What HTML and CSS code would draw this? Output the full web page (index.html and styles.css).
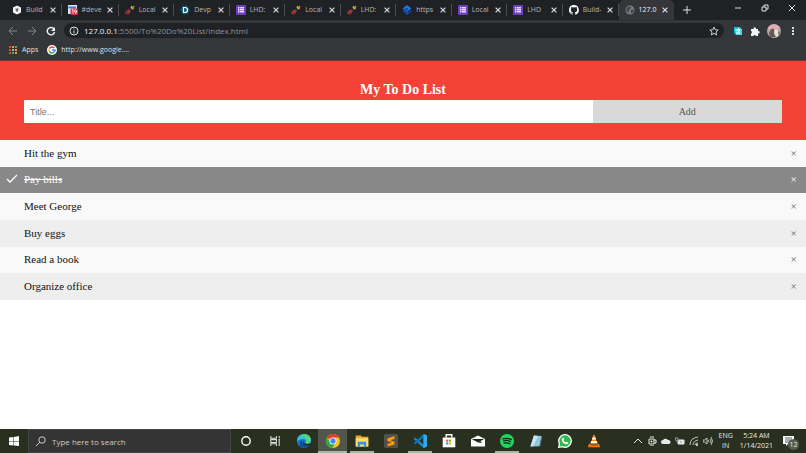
FILE: index.html
```html
<!DOCTYPE html>
<html lang="en">
<head>
    <meta charset="UTF-8">
    <meta name="viewport" content="width=device-width, initial-scale=1.0">
    <title>My To Do List</title>
    <link rel="stylesheet" href="styles.css">
</head>
<body>
    <!-- shared icons -->
    <svg class="defs" aria-hidden="true">
        <symbol id="close" viewBox="0 0 10 10"><path d="M2 2l6 6M8 2l-6 6" fill="none" stroke="currentColor" stroke-width="1.6"/></symbol>
        <symbol id="rocket" viewBox="0 0 20 20"><path d="M13 1l2 3 3-3 1 3-3 2 3 2-4 1-4-3 1-4z" fill="#d9a82f"/><path d="M10 6l4 4-3 3-4-4z" fill="#27365c"/><path d="M7 9l4 4-4 6-6-1 0-5z" fill="#c9362d"/><path d="M4 12l4 4-2 2-4-4z" fill="#27365c"/></symbol>
        <symbol id="form" viewBox="0 0 20 20"><rect width="20" height="20" rx="2" fill="#6f3fc0"/><path d="M4 4h3v3H4zM8 4h8v3H8zM4 8h3v3H4zM8 8h8v3H8zM4 12h3v3H4zM8 12h8v3H8z" fill="#e9defa"/></symbol>
        <symbol id="chrome" viewBox="0 0 20 20"><circle cx="10" cy="10" r="10" fill="#fbc116"/><path d="M10 10L1.4 5A10 10 0 0 1 18.7 5H10z" fill="#e33b2e"/><path d="M1.4 5A10 10 0 0 0 9 20l5-8-4-2-4 2z" fill="#2da94f"/><circle cx="10" cy="10" r="5" fill="#fff"/><circle cx="10" cy="10" r="3.8" fill="#4285f4"/></symbol>
    </svg>

    <header class="browser">
        <div class="tabs">
            <div class="tab-list">
                <div class="tab"><svg class="favicon" viewBox="0 0 20 20"><path d="M10 1l8 4v10l-8 4-8-4V5z" fill="#f2f2f2"/><path d="M7 7h6l-1 6H8z" fill="#666"/></svg><span>Build</span><button aria-label="Close tab"><svg><use href="#close"/></svg></button></div>
                <div class="tab"><svg class="favicon" viewBox="0 0 20 20"><rect width="18" height="18" fill="#dce3f4"/><path d="M1 3h15v4H1z" fill="#4b73d8"/><rect x="5" y="7" width="15" height="13" rx="3" fill="#e0304a"/><path d="M8 10l2-1v8M17 13a2 2 0 1 1-4-1 2 2 0 1 1 4 0v3l-3 2" fill="none" stroke="#fff" stroke-width="1.6"/></svg><span>#deve</span><button aria-label="Close tab"><svg><use href="#close"/></svg></button></div>
                <div class="tab"><svg class="favicon"><use href="#rocket"/></svg><span>Local</span><button aria-label="Close tab"><svg><use href="#close"/></svg></button></div>
                <div class="tab"><svg class="favicon" viewBox="0 0 20 20"><path d="M5 1h10l5 9-5 9H5l-5-9z" fill="#075468"/><path d="M7 5h3q5 0 5 5t-5 5H7z" fill="none" stroke="#fff" stroke-width="2.4"/></svg><span>Devp</span><button aria-label="Close tab"><svg><use href="#close"/></svg></button></div>
                <div class="tab"><svg class="favicon"><use href="#form"/></svg><span>LHD:</span><button aria-label="Close tab"><svg><use href="#close"/></svg></button></div>
                <div class="tab"><svg class="favicon"><use href="#rocket"/></svg><span>Local</span><button aria-label="Close tab"><svg><use href="#close"/></svg></button></div>
                <div class="tab"><svg class="favicon"><use href="#rocket"/></svg><span>LHD:</span><button aria-label="Close tab"><svg><use href="#close"/></svg></button></div>
                <div class="tab"><svg class="favicon" viewBox="0 0 20 20"><path d="M10 0l9 7-9 7-9-7z" fill="#1f78db"/><path d="M1 11l9-6 3 3-5 4 4 3 7-5v3l-9 7z" fill="#0c4fac"/></svg><span>https</span><button aria-label="Close tab"><svg><use href="#close"/></svg></button></div>
                <div class="tab"><svg class="favicon"><use href="#form"/></svg><span>Local</span><button aria-label="Close tab"><svg><use href="#close"/></svg></button></div>
                <div class="tab"><svg class="favicon"><use href="#form"/></svg><span>LHD</span><button aria-label="Close tab"><svg><use href="#close"/></svg></button></div>
                <div class="tab"><svg class="favicon" viewBox="0 0 16 16"><path fill="#fff" d="M8 0a8 8 0 0 0-2.5 15.6c.4 0 .5-.2.5-.4v-1.500c-2.200.5-2.700-1-2.700-1-.4-.9-.9-1.200-.9-1.200-.7-.5 0-.5 0-.5.8.1 1.200.8 1.200.8.7 1.300 1.900.9 2.400.7 0-.5.3-.9.5-1.100-1.800-.2-3.600-.9-3.600-4 0-.8.3-1.600.8-2.100 0-.2-.3-1 .1-2.100 0 0 .7-.2 2.200.8a7.500 7.500 0 0 1 4 0c1.500-1 2.200-.8 2.200-.8.4 1.100.1 1.900.1 2.100.5.600.8 1.300.8 2.100 0 3.100-1.900 3.800-3.700 4 .3.2.6.7.6 1.500v2.200c0 .2.1.5.5.4A8 8 0 0 0 8 0z"/></svg><span>Build-</span><button aria-label="Close tab"><svg><use href="#close"/></svg></button></div>
                <div class="tab active"><svg class="favicon" viewBox="0 0 20 20"><circle cx="10" cy="10" r="9" fill="#777b80"/><path d="M3 7l4-4 5 1-1 4-4 2 1 3-2 2-3-4zM12 10l6-1-2 6-4 1z" fill="#414347"/></svg><span>127.0</span><button aria-label="Close tab"><svg><use href="#close"/></svg></button></div>
            </div>
            <button class="new-tab" aria-label="New tab"><svg viewBox="0 0 10 10"><path d="M5 1v8M1 5h8" stroke="currentColor"/></svg></button>
            <div class="window-buttons">
                <button aria-label="Minimize"><svg viewBox="0 0 10 10"><path d="M2 5h6" stroke="currentColor"/></svg></button>
                <button aria-label="Restore"><svg viewBox="0 0 10 10"><path d="M2 4h4v4H2zM4 4V2h4v4H6" fill="none" stroke="currentColor"/></svg></button>
                <button aria-label="Close"><svg viewBox="0 0 10 10"><path d="M2 2l6 6M8 2l-6 6" stroke="currentColor"/></svg></button>
            </div>
        </div>

        <div class="toolbar">
            <button class="nav" aria-label="Back"><svg viewBox="0 0 10 10"><path d="M9 5H1M5 1L1 5l4 4" fill="none" stroke="currentColor"/></svg></button>
            <button class="nav" aria-label="Forward"><svg viewBox="0 0 10 10"><path d="M1 5h8M5 1l4 4-4 4" fill="none" stroke="currentColor"/></svg></button>
            <button class="nav reload" aria-label="Reload"><svg viewBox="0 0 10 10"><path d="M8 3a3.700 3.700 0 1 0 .6 3" fill="none" stroke="currentColor" stroke-width="1.400"/><path d="M9 1v4H5z" fill="currentColor"/></svg></button>
            <div class="address">
                <svg viewBox="0 0 10 10"><circle cx="5" cy="5" r="4" fill="none" stroke="currentColor"/><path d="M5 4.500v3M5 2.500v1" stroke="currentColor"/></svg>
                <span class="url"><b>127.0.0.1</b>:5500/To%20Do%20List/index.html</span>
                <svg viewBox="0 0 10 10"><path d="M5 1l1.200 2.700 2.900.3L7 6l.6 2.900L5 7.400 2.400 8.900 3 6 .9 4l2.900-.3z" fill="none" stroke="currentColor" stroke-width=".9"/></svg>
            </div>
            <div class="extensions">
                <svg viewBox="0 0 10 10"><path d="M1 1h6l2 2v6H3L1 7z" fill="#14bfd3"/><path d="M3 3h6v6H3z" fill="#4fd9e6"/><path d="M2 4h5M5 2l2 2-2 2M3 7h4" fill="none" stroke="#fff"/></svg>
                <svg viewBox="0 0 10 10"><path d="M1 3h2.500a1.300 1.300 0 1 1 2.500 0H8v2a1.300 1.300 0 1 1 0 2.500V10H6a1.300 1.300 0 0 0-2.500 0H1V7.500a1.300 1.300 0 0 0 0-2.500z" fill="#f1f3f4"/></svg>
                <svg class="avatar" viewBox="0 0 14 14"><circle cx="7" cy="7" r="7" fill="#b8aaa0"/><path d="M1 4a7 7 0 0 1 12 0L9 5 6 3 3 6z" fill="#e2b0b4"/><path d="M4 5h3v4l2 4H3L2 9z" fill="#615b5b"/><path d="M8 5l3 1v6l-2 1-2-4z" fill="#e4dfd9"/><path d="M11 8l3-1-2 5z" fill="#6c7d4d"/></svg>
                <button aria-label="Menu"><svg viewBox="0 0 10 10"><path d="M4 1h2v2H4zM4 4h2v2H4zM4 7h2v2H4z" fill="#dadce0"/></svg></button>
            </div>
        </div>

        <nav class="bookmarks">
            <a href="#"><svg viewBox="0 0 10 10"><path d="M1 1h2v2H1zM1 4h2v2H1zM1 7h2v2H1z" fill="#d95040"/><path d="M4 1h2v2H4zM7 4h2v2H7z" fill="#e2a545"/><path d="M7 1h2v2H7zM4 7h2v2H4z" fill="#4cad64"/><path d="M4 4h2v2H4zM7 7h2v2H7z" fill="#caa94b"/></svg>Apps</a>
            <a href="#"><svg viewBox="0 0 20 20"><circle cx="10" cy="10" r="10" fill="#fff"/><g fill="none" stroke-width="3"><path d="M14.500 6A6 6 0 0 0 5 7" stroke="#ea4335"/><path d="M5 7a6 6 0 0 0 0 6" stroke="#fbbc05"/><path d="M5 13a6 6 0 0 0 9 1.500" stroke="#34a853"/><path d="M14 14.500A6 6 0 0 0 16 10h-6" stroke="#4285f4"/></g></svg>http://www.google....</a>
        </nav>
    </header>

    <main>
        <form class="header" onsubmit="newElement(event)">
            <h1>My To Do List</h1>
            <div class="entry">
                <input type="text" id="myInput" placeholder="Title..." aria-label="Title">
                <button type="submit">Add</button>
            </div>
        </form>

        <ul id="myUL">
            <li><span>Hit the gym</span><button class="close" aria-label="Remove">×</button></li>
            <li class="checked"><svg viewBox="0 0 12 10" aria-hidden="true"><path d="M1 5l3 3 7-7" fill="none" stroke="currentColor" stroke-width="1.300"/></svg><span>Pay bills</span><button class="close" aria-label="Remove">×</button></li>
            <li><span>Meet George</span><button class="close" aria-label="Remove">×</button></li>
            <li><span>Buy eggs</span><button class="close" aria-label="Remove">×</button></li>
            <li><span>Read a book</span><button class="close" aria-label="Remove">×</button></li>
            <li><span>Organize office</span><button class="close" aria-label="Remove">×</button></li>
        </ul>
    </main>

    <footer class="taskbar">
        <button class="start" aria-label="Start"><svg viewBox="0 0 20 20"><path d="M0 3l9-1v8H0zM10 2l10-2v10H10zM0 11h9v8l-9-1zM10 11h10v9l-10-1z" fill="#fff"/></svg></button>
        <label class="search">
            <svg viewBox="0 0 10 10"><circle cx="6" cy="4" r="3.200" fill="none" stroke="currentColor"/><path d="M4 6L0 10" stroke="currentColor"/></svg>
            <input type="text" placeholder="Type here to search" aria-label="Search">
        </label>
        <div class="apps">
            <button aria-label="Cortana"><svg viewBox="0 0 20 20"><circle cx="10" cy="10" r="6" fill="none" stroke="#fff" stroke-width="2"/></svg></button>
            <button aria-label="Task View"><svg viewBox="0 0 20 20"><path d="M4 3v3h8V3M4 17v-3h8v3M4 8h8v4H4zM16 3v3M16 9v8M15 8h2" fill="none" stroke="#ddd" stroke-width="1.500"/></svg></button>
            <button aria-label="Edge"><svg viewBox="0 0 20 20"><circle cx="10" cy="10" r="10" fill="#1479cf"/><path d="M0 9C1-3 20-3 20 9c0 5-6 6-8 4 2-2 1-6-3-6-4 0-7 1-9 4z" fill="#35c3d0"/><path d="M8 1c9-3 15 8 9 12-3 1-5 0-5-1 3-3 1-7-4-11z" fill="#58d47a"/><path d="M7 9c-1 6 4 9 11 7-4 6-14 4-14-2 0-3 1-4 3-5z" fill="#0d4c9b"/><path d="M10 8c-3 4 1 7 7 6l3 0-1 2C11 19 5 13 10 8z" fill="#29301f"/></svg></button>
            <button class="open current" aria-label="Chrome"><svg><use href="#chrome"/></svg></button>
            <button class="open" aria-label="File Explorer"><svg viewBox="0 0 20 20"><path d="M1 2h7l2 2h9v14H1z" fill="#e6ac32"/><path d="M1 6h18v12H1z" fill="#fbd975"/><path d="M4 11h12v8h-3v-4H7v4H4z" fill="#378fd9"/></svg></button>
            <button aria-label="Sublime Text"><svg viewBox="0 0 20 20"><rect width="20" height="20" rx="2" fill="#50504c"/><path d="M15 3v4l-6 2 6 2v4L5 18v-4l6-2-6-2V6z" fill="#ff9800"/></svg></button>
            <button class="open" aria-label="Visual Studio Code"><svg viewBox="0 0 20 20"><path d="M15 0l5 2v16l-5 2L1 7l2-2 12 10z" fill="#168bd2"/><path d="M15 0v5L3 15l-2-2z" fill="#0872b7"/><path d="M15 0l5 2v16l-5 2z" fill="#32a9ef"/></svg></button>
            <button aria-label="Store"><svg viewBox="0 0 20 20"><path d="M6 5V1h8v4" fill="none" stroke="#fff" stroke-width="2"/><path d="M1 5h18v14H1z" fill="#fff"/><path d="M6 8h3v3H6z" fill="#f25022"/><path d="M10 8h3v3h-3z" fill="#7fba00"/><path d="M6 12h3v3H6z" fill="#00a4ef"/><path d="M10 12h3v3h-3z" fill="#ffb900"/></svg></button>
            <button aria-label="Mail"><svg viewBox="0 0 20 20"><path d="M0 7l10-5 10 5v11H0z" fill="#fff"/><path d="M1 7h18l-9 5z" fill="#20251a"/><path d="M10 12l3-2 3 3z" fill="#20251a"/></svg></button>
            <button class="open" aria-label="Spotify"><svg viewBox="0 0 20 20"><circle cx="10" cy="10" r="10" fill="#1ed760"/><path d="M4 7q7-2 12 1M5 10q6-2 10 1M6 13q5-1 8 1" fill="none" stroke="#172018" stroke-width="1.800" stroke-linecap="round"/></svg></button>
            <button aria-label="Notepad"><svg viewBox="0 0 20 20"><path d="M7 2l11 1-3 14-13 1z" fill="#8fc9df"/><path d="M7 2l6 1L6 18l-4 0z" fill="#c9e4ed"/><path d="M18 3l1 1-3 14-13 1-1-1 13-1z" fill="#537987"/></svg></button>
            <button aria-label="WhatsApp"><svg viewBox="0 0 20 20"><path d="M1 19l1-5a9 9 0 1 1 4 4z" fill="#2eb84c" stroke="#fff" stroke-width="1.800"/><path d="M6 6l2-1 1 3-1 1q1 2 3 3l1-1 3 1-1 2q-3 2-7-2-3-4-1-6z" fill="#fff"/></svg></button>
            <button aria-label="VLC"><svg viewBox="0 0 20 20"><path d="M9 1h2l4 14H5z" fill="#f58216"/><path d="M8 5h4l1 3H7zM6 10h8l1 3H5z" fill="#fff"/><path d="M3 14h2l1 2h8l1-2h2l2 5H1z" fill="#ed7210"/></svg></button>
        </div>
        <div class="tray">
            <svg viewBox="0 0 10 10"><path d="M1 7l4-4 4 4" fill="none" stroke="currentColor"/></svg>
            <svg viewBox="0 0 10 10"><path d="M2 3h5v5H2zM3 1h4M3 10h4M7 4h2v3H7" fill="none" stroke="currentColor"/><circle cx="4.500" cy="5.500" r="1" fill="currentColor"/></svg>
            <svg viewBox="0 0 10 10"><path d="M2 8a2 2 0 0 1 0-4 3 3 0 0 1 5 0 2 2 0 0 1 1 4z" fill="currentColor"/></svg>
            <svg viewBox="0 0 10 10"><path d="M3 4h6v4H3z" fill="currentColor" stroke="currentColor"/><path d="M0 2h3v3H1zM5 5l2 2" fill="none" stroke="#999"/></svg>
            <svg viewBox="0 0 10 10"><path d="M1 9Q1 2 9 1M4 9Q4 5 9 4M6 9q0-2 3-2" fill="none" stroke="currentColor" stroke-width=".8"/><circle cx="8" cy="9" r="1" fill="currentColor"/></svg>
            <svg viewBox="0 0 10 10"><path d="M0 4h1.500L4 2v6L1.500 6H0zM5 4q1 1 0 2M7 3q2 2 0 4M8 1q3 4 0 8" fill="none" stroke="currentColor" stroke-width=".8"/></svg>
            <span class="lang">ENG<br>IN</span>
            <span class="clock">5:24 AM<br>1/14/2021</span>
            <button class="notice" aria-label="Notifications"><svg viewBox="0 0 12 12"><path d="M0 1h11v8H5l-2 2V9H0z" fill="#fff"/><path d="M2 3h7M2 5h7M2 7h4" stroke="#30372a" stroke-width=".8"/></svg><span class="badge">12</span></button>
        </div>
    </footer>

    <script>
        // Mark an item as done, or remove it with its close button
        var list = document.getElementById('myUL');
        list.addEventListener('click', function (ev) {
            if (ev.target.className === 'close') {
                ev.target.parentElement.remove();
            } else if (ev.target.closest('li')) {
                ev.target.closest('li').classList.toggle('checked');
            }
        });

        function newElement(event) {
            event.preventDefault();
            var input = document.getElementById('myInput');
            if (input.value === '') {
                return;
            }
            var li = document.createElement('li');
            var text = document.createElement('span');
            text.textContent = input.value;
            var button = document.createElement('button');
            button.className = 'close';
            button.textContent = '×';
            li.appendChild(text);
            li.appendChild(button);
            list.appendChild(li);
            input.value = '';
        }
    </script>
</body>
</html>
```
FILE: styles.css
```css
* {
    box-sizing: border-box;
}

body {
    margin: 0;
    min-height: 100vh;
    display: flex;
    flex-direction: column;
    font-family: "Liberation Serif", serif;
    background-color: white;
}

button {
    border: none;
    padding: 0;
    background: none;
    color: inherit;
    font: inherit;
    cursor: pointer;
}

svg {
    display: block;
    flex: none;
    width: 10px;
    height: 10px;
}

.defs {
    position: absolute;
    width: 0;
    height: 0;
}

/* Browser window */
.browser {
    font-family: "Open Sans", sans-serif;
    font-size: 7px;
    line-height: 10px;
    color: #dfe1e5;
    background-color: #35363a;
    border-bottom: 1px solid #7c302e;
}

.tabs {
    display: flex;
    height: 20px;
    padding-left: 6px;
    background-color: #202124;
}

.tab-list {
    display: flex;
    flex: 0 1 668px;
    min-width: 0;
}

.tab {
    display: flex;
    flex: 1 1 0;
    align-items: center;
    gap: 4px;
    padding: 0 5px 0 6px;
    color: #b4b7bb;
    background: linear-gradient(#4b4d51, #4b4d51) right center / 1px 12px no-repeat;
}

.tab span {
    flex: 1;
    white-space: nowrap;
}

.tab button svg {
    width: 8px;
    height: 8px;
    color: #d5d7da;
}

.tab.active {
    color: #f1f3f4;
    background: #35363a;
    border-radius: 5px 5px 0 0;
}

.new-tab {
    padding: 0 8px;
}

.window-buttons {
    display: flex;
    gap: 17px;
    margin-left: auto;
    padding: 3px 9px 7px 0;
}

.toolbar {
    display: flex;
    align-items: center;
    height: 21px;
    padding: 0 8px;
}

.nav {
    margin-right: 9px;
    color: #85878b;
}

.reload {
    margin-right: 8px;
    color: #f1f3f4;
}

.address {
    display: flex;
    flex: 1;
    align-items: center;
    gap: 5px;
    height: 15px;
    padding: 0 5px;
    border-radius: 8px;
    background-color: #202124;
}

.url {
    flex: 1;
    font-size: 8px;
    color: #8f9296;
}

.url b {
    font-weight: normal;
    color: #f1f3f4;
}

.extensions {
    display: flex;
    align-items: center;
    gap: 7px;
    margin-left: 9px;
}

.extensions .avatar {
    width: 14px;
    height: 14px;
}

.bookmarks {
    display: flex;
    gap: 9px;
    height: 19px;
    padding: 0 8px 2px;
}

.bookmarks a {
    display: flex;
    align-items: center;
    gap: 4px;
    color: inherit;
    text-decoration: none;
}

/* To do list */
main {
    flex: 1;
}

.header {
    padding: 19px 24px 17px;
    background-color: #f44336;
    color: white;
}

.header h1 {
    margin: 0 0 1px;
    font-size: 14px;
    line-height: 19px;
    text-align: center;
}

.entry {
    display: flex;
    height: 23px;
}

.entry input {
    width: 75%;
    padding: 0 6px;
    border: none;
    border-radius: 0;
    font-family: "Liberation Sans", sans-serif;
    font-size: 9px;
}

.entry button {
    width: 25%;
    background-color: #d9d9d9;
    color: #555;
    font-size: 10px;
}

#myUL {
    display: grid;
    grid-auto-rows: 1fr;
    min-height: 160px;
    margin: 0;
    padding: 0;
    list-style: none;
    font-size: 11px;
    color: #111;
}

#myUL li {
    display: flex;
    position: relative;
    align-items: center;
    padding: 0 0 1px 24px;
    background-color: #f9f9f9;
    cursor: pointer;
}

#myUL li:nth-child(even) {
    background-color: #eee;
}

#myUL li.checked {
    background-color: #888;
    color: white;
}

#myUL li.checked span {
    text-decoration: line-through;
}

#myUL li svg {
    position: absolute;
    left: 6px;
    width: 12px;
}

.close {
    width: 25px;
    margin-left: auto;
    align-self: stretch;
    color: #666;
}

.checked .close {
    color: white;
}

/* Taskbar */
.taskbar {
    display: flex;
    height: 24px;
    font-family: "Open Sans", sans-serif;
    font-size: 7px;
    color: #e8e8e8;
    background-color: #29301f;
}

.start {
    display: flex;
    align-items: center;
    justify-content: center;
    width: 28px;
}

.search {
    display: flex;
    flex: 0 1 203px;
    align-items: center;
    gap: 6px;
    padding: 0 7px;
    border: 1px solid #464744;
    color: #ccc;
    background-color: #343434;
}

.search input {
    flex: 1;
    min-width: 0;
    padding: 0;
    border: none;
    background: none;
    color: inherit;
    font: inherit;
    font-size: 8px;
}

.search input::placeholder {
    color: #ccc;
}

.apps {
    display: flex;
}

.apps button {
    display: flex;
    align-items: center;
    justify-content: center;
    width: 29px;
}

.apps svg {
    width: 14px;
    height: 14px;
}

.apps .open {
    background: linear-gradient(#a9b5a1, #a9b5a1) center bottom / 24px 2px no-repeat;
}

.apps .current {
    background-color: #50564a;
    background-size: 100% 2px;
}

.tray {
    display: flex;
    align-items: center;
    gap: 4px;
    margin-left: auto;
    padding-right: 11px;
}

.lang,
.clock {
    line-height: 10px;
    text-align: center;
}

.lang {
    margin-left: 2px;
}

.clock {
    margin: 0 6px 0 3px;
}

.notice {
    position: relative;
}

.notice svg {
    width: 12px;
    height: 12px;
}

.badge {
    position: absolute;
    left: 5px;
    top: 4px;
    width: 11px;
    height: 11px;
    border-radius: 50%;
    background-color: #555b50;
    line-height: 11px;
}
```
